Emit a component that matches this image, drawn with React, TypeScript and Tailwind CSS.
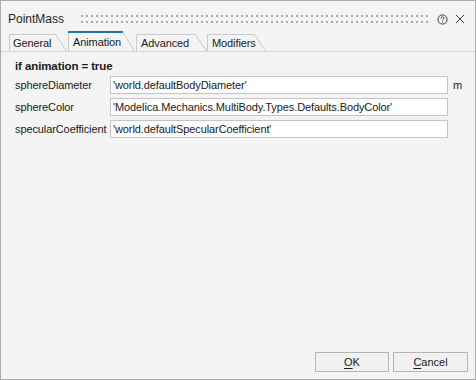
import React from 'react';

const font = { fontFamily: '"Liberation Sans", Arial, sans-serif' };

type TabProps = { label: string; width: number; active?: boolean; textLeft: number };

const Tab: React.FC<TabProps> = ({ label, width, active, textLeft }) => {
  const top = active ? 0 : 3;
  const slant = active ? 12 : 11;
  const h = 20;
  return (
    <div className="relative h-[20px] shrink-0" style={{ width }}>
      <svg className="absolute inset-0" width={width} height={h}>
        <path
          d={`M0.5 ${h} V${top + 0.5} H${width - slant - 0.5} L${width - 0.5} ${h}`}
          fill="#f4f4f4"
          stroke="#c9c9c9"
          strokeWidth="1"
        />
        {active && <rect x="0" y="0" width={width - slant} height="2" fill="#1d77a8" />}
      </svg>
      <span
        className="absolute text-[11px] tracking-[-0.1px] leading-[16px] text-[#1a1a1a] whitespace-nowrap"
        style={{ left: textLeft, top: active ? 3 : 4 }}
      >
        {label}
      </span>
    </div>
  );
};

export default function App() {
  const rows = [
    { label: 'sphereDiameter', value: "'world.defaultBodyDiameter'", unit: 'm' },
    { label: 'sphereColor', value: "'Modelica.Mechanics.MultiBody.Types.Defaults.BodyColor'", unit: '' },
    { label: 'specularCoefficient', value: "'world.defaultSpecularCoefficient'", unit: '' },
  ];

  return (
    <div style={font} className="w-[476px] h-[380px] border border-[#ababab] bg-[#f4f4f4] flex flex-col text-[#1a1a1a]">
      {/* title bar */}
      <div className="flex items-center h-[30px] pt-[6px] pl-[7px] pr-[10px]">
        <span className="text-[12px] leading-[20px] text-[#1f1f1f]">PointMass</span>
        <svg className="ml-[17px] flex-1 h-[9px]" height="9">
          <defs>
            <pattern id="grip" width="5" height="9" patternUnits="userSpaceOnUse">
              <rect x="0" y="0" width="2" height="2" fill="#a8a8a8" />
              <rect x="0" y="6" width="2" height="2" fill="#a8a8a8" />
            </pattern>
          </defs>
          <rect width="100%" height="9" fill="url(#grip)" />
        </svg>
        <svg className="ml-[8px]" width="11" height="11" viewBox="0 0 11 11">
          <circle cx="5.5" cy="5.5" r="4.6" fill="none" stroke="#3a3a3a" strokeWidth="1" />
          <path d="M3.9 4.4 C3.9 3.3 4.6 2.9 5.5 2.9 C6.4 2.9 7.1 3.4 7.1 4.2 C7.1 5.1 5.5 5.2 5.5 6.4" fill="none" stroke="#3a3a3a" strokeWidth="1" />
          <rect x="5" y="7.4" width="1" height="1" fill="#3a3a3a" />
        </svg>
        <svg className="ml-[7px]" width="10" height="10" viewBox="0 0 10 10">
          <path d="M1 1 L9 9 M9 1 L1 9" stroke="#3a3a3a" strokeWidth="1" />
        </svg>
      </div>

      {/* tabs */}
      <div className="flex items-end h-[21px] pl-[8px] border-b border-[#d6d6d6]">
        <Tab label="General" width={58} textLeft={4} />
        <div className="w-[1px]" />
        <Tab label="Animation" width={67} textLeft={5} active />
        <div className="w-[1px]" />
        <Tab label="Advanced" width={71} textLeft={5} />
        <Tab label="Modifiers" width={59} textLeft={5} />
      </div>

      {/* content */}
      <div className="pl-[14px] pt-[6px] text-[11px] tracking-[-0.1px]">
        <div className="leading-[16px] font-bold text-[11.5px]">if animation = true</div>
        <div className="mt-[2px] flex flex-col gap-[4px]">
          {rows.map((r) => (
            <div key={r.label} className="flex items-center h-[18px]">
              <span className="w-[95px] whitespace-nowrap">{r.label}</span>
              <div className="w-[338px] h-[18px] bg-white border border-[#c4c4c4] flex items-center pl-[2px] whitespace-nowrap overflow-hidden">
                {r.value}
              </div>
              <span className="pl-[5px]">{r.unit}</span>
            </div>
          ))}
        </div>
      </div>

      <div className="flex-1" />

      {/* buttons */}
      <div className="flex justify-end gap-[4px] pr-[7px] pb-[7px] text-[11px]">
        <button className="w-[74px] h-[20px] border border-[#b4b4b4] bg-[#f1f1f1] leading-[16px]">
          <span className="underline underline-offset-2">O</span>K
        </button>
        <button className="w-[75px] h-[20px] border border-[#b4b4b4] bg-[#f1f1f1] leading-[16px]">
          <span className="underline underline-offset-2">C</span>ancel
        </button>
      </div>
    </div>
  );
}
